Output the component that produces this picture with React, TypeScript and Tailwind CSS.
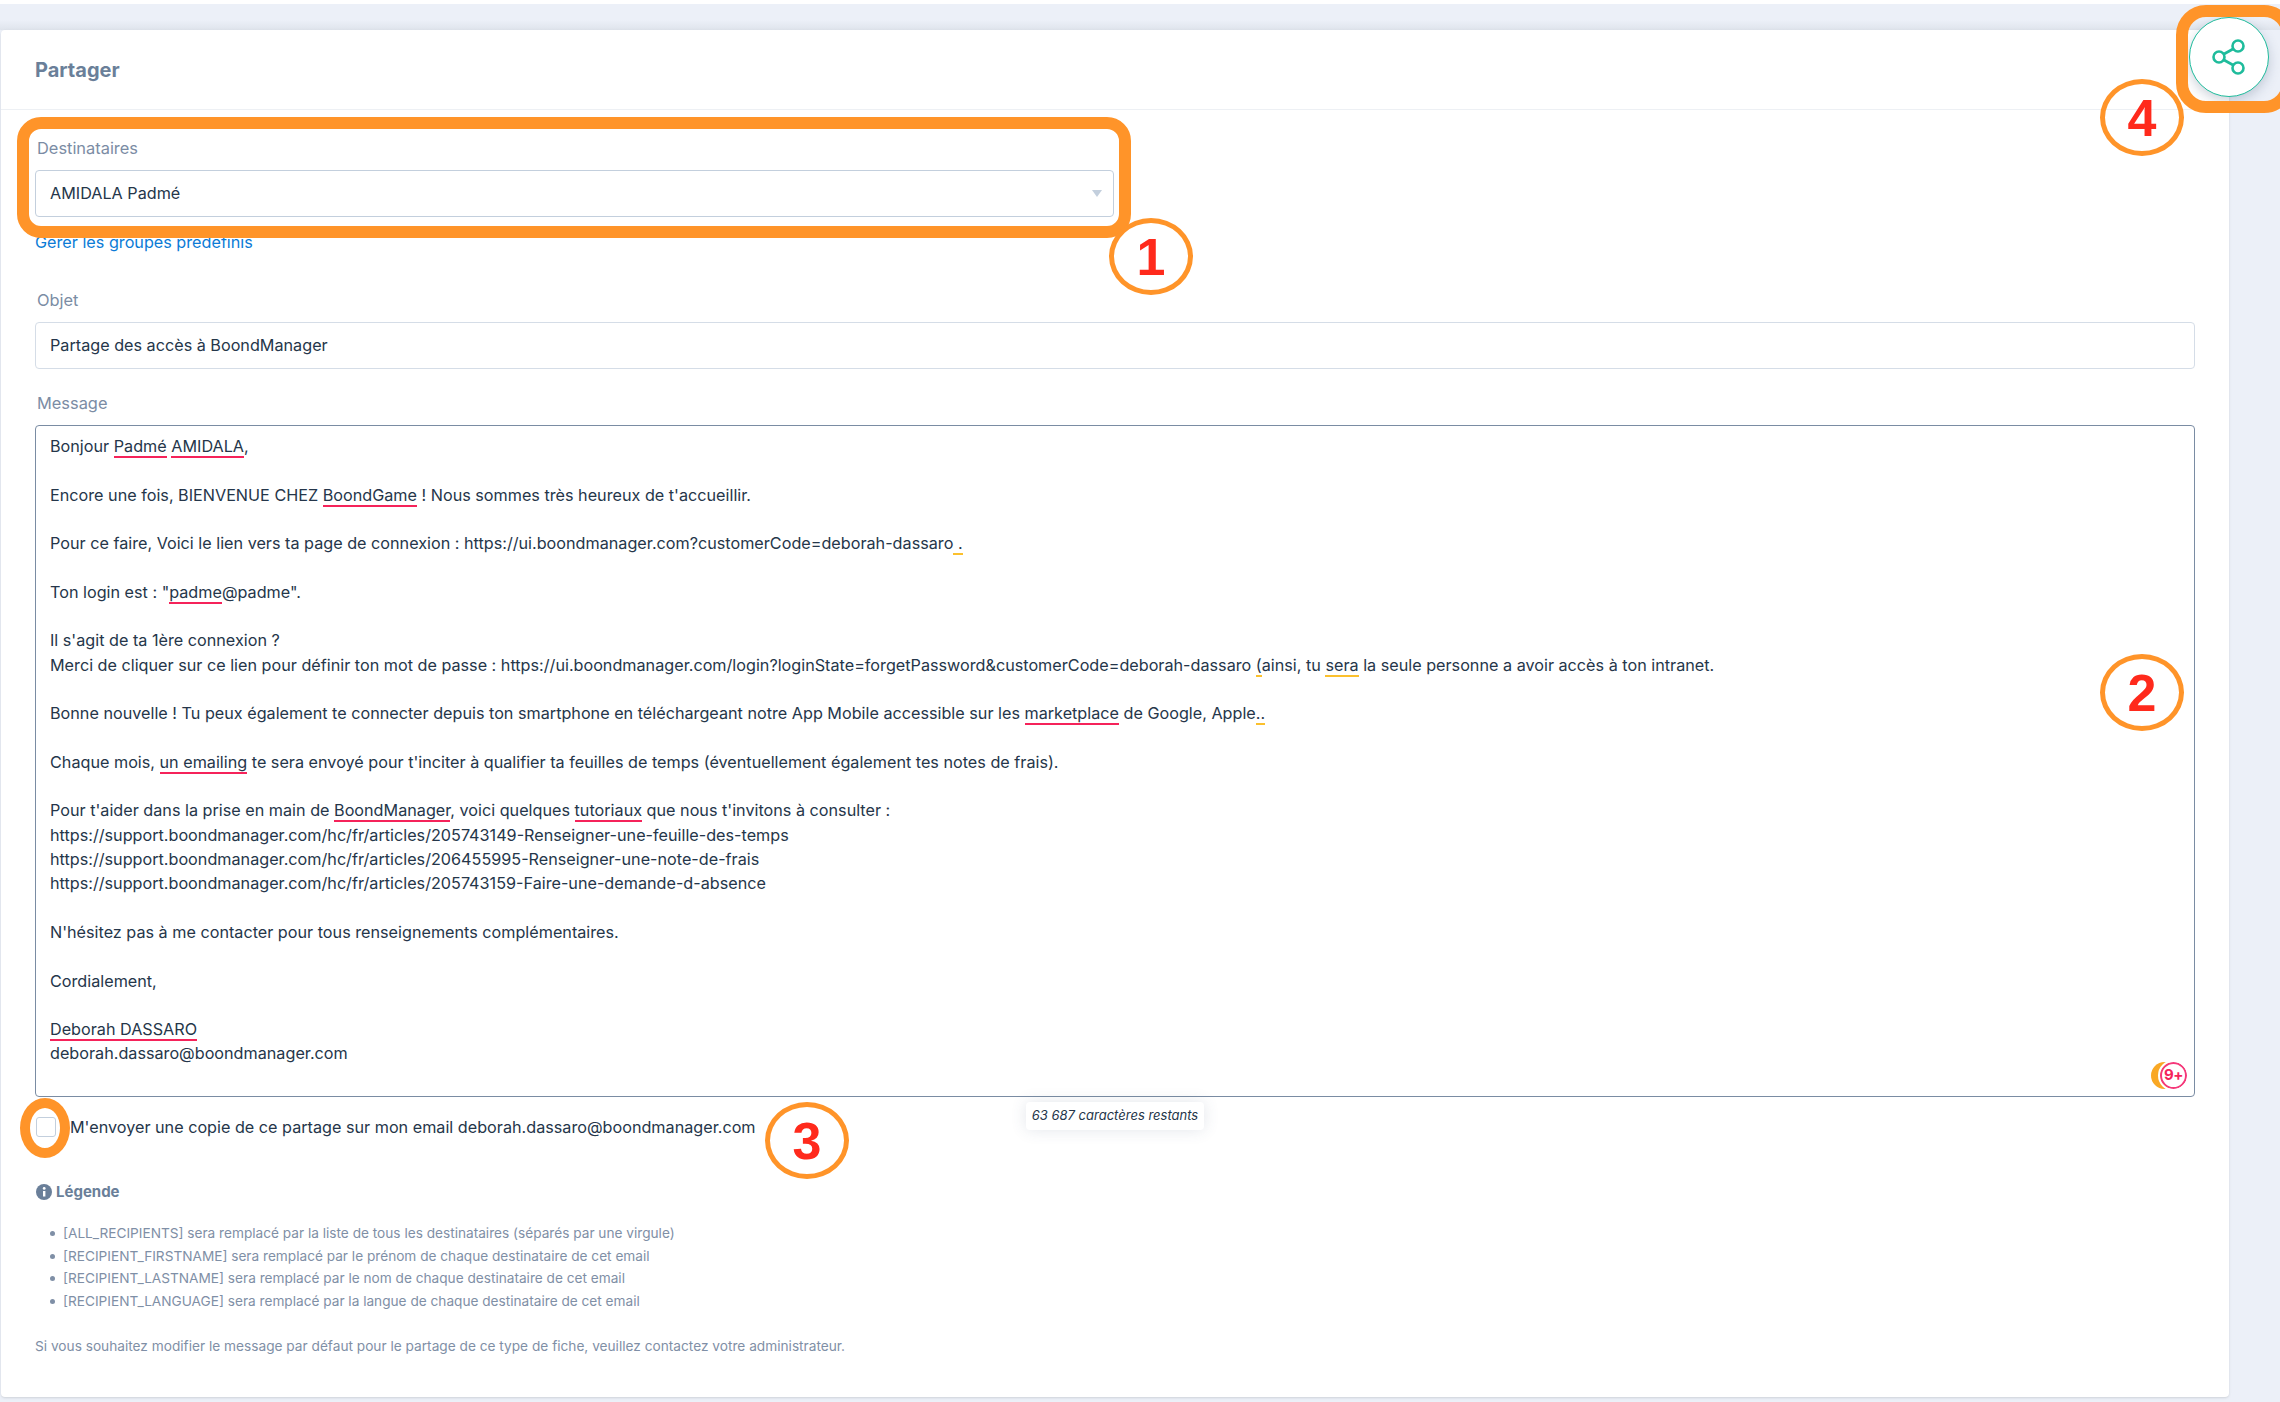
import { Info } from 'lucide-react';
import type { ReactNode } from 'react';

const Red = ({ children }: { children: ReactNode }) => (
  <span className="border-b-2 border-[#f5235a]">{children}</span>
);

const Yellow = ({ children }: { children: ReactNode }) => (
  <span className="border-b-2 border-[#fbc02d]">{children}</span>
);

const Line = ({ children }: { children?: ReactNode }) => (
  <div className="h-[24.3px] leading-[24.3px] whitespace-nowrap">{children}</div>
);

const Marker = ({ n, className }: { n: string; className: string }) => (
  <div
    className={`absolute w-[84px] h-[77px] rounded-[50%] border-[5px] border-[#ff9429] flex items-center justify-center text-[#ff2a1c] font-bold text-[52px] font-['Liberation_Sans',sans-serif] ${className}`}
  >
    {n}
  </div>
);

const legend = [
  '[ALL_RECIPIENTS] sera remplacé par la liste de tous les destinataires (séparés par une virgule)',
  '[RECIPIENT_FIRSTNAME] sera remplacé par le prénom de chaque destinataire de cet email',
  '[RECIPIENT_LASTNAME] sera remplacé par le nom de chaque destinataire de cet email',
  '[RECIPIENT_LANGUAGE] sera remplacé par la langue de chaque destinataire de cet email',
];

const App = () => {
  return (
    <div className="relative w-[2280px] h-[1402px] overflow-hidden bg-[#ecf0f8] pt-[30px] font-['Inter',sans-serif] text-[16.2px] text-[#25364a]">
      <div className="absolute top-0 left-0 right-0 h-[4px] bg-white" />
      <div className="absolute top-[20px] left-0 right-0 h-[10px] bg-gradient-to-b from-[#ecf0f8] to-[#dfe4ec]" />

      <div className="relative ml-[1px] w-[2228px] h-[1367px] bg-white rounded-[4px] shadow-sm">
        <div className="h-[80px] flex items-center px-[34px] border-b border-[#edf0f4]">
          <h2 className="text-[20px] font-bold text-[#6a7f99]">Partager</h2>
        </div>

        <div className="px-[34px]">
          <label className="block mt-[26px] ml-[2px] h-[24px] leading-[24px] text-[16.4px] text-[#7b8ca4]">Destinataires</label>
          <div className="mt-[10px] w-[1079px] h-[47px] border border-[#c3cfdd] rounded-[4px] flex items-center justify-between pl-[14px] pr-[11px]">
            <span>AMIDALA Padmé</span>
            <span className="w-0 h-0 border-x-[5px] border-x-transparent border-t-[7px] border-t-[#c3cfdd]" />
          </div>
          <a href="#" className="block mt-[13px] h-[24px] leading-[24px] text-[#0b7bd6]">
            Gérer les groupes prédéfinis
          </a>

          <label className="block mt-[34px] ml-[2px] h-[24px] leading-[24px] text-[16.4px] text-[#7b8ca4]">Objet</label>
          <div className="mt-[10px] w-[2160px] h-[47px] border border-[#d5dde7] rounded-[4px] flex items-center pl-[14px]">
            Partage des accès à BoondManager
          </div>

          <label className="block mt-[22px] ml-[2px] h-[24px] leading-[24px] text-[16.4px] text-[#7b8ca4]">Message</label>
          <div className="relative mt-[10px] w-[2160px] h-[672px] border border-[#7a8ca3] rounded-[4px] pl-[14px] pt-[8px]">
            <Line>Bonjour <Red>Padmé</Red> <Red>AMIDALA</Red>,</Line>
            <Line />
            <Line>Encore une fois, BIENVENUE CHEZ <Red>BoondGame</Red> ! Nous sommes très heureux de t'accueillir.</Line>
            <Line />
            <Line>Pour ce faire, Voici le lien vers ta page de connexion : https://ui.boondmanager.com?customerCode=deborah-dassaro<Yellow> .</Yellow></Line>
            <Line />
            <Line>Ton login est : "<Red>padme</Red>@padme".</Line>
            <Line />
            <Line>Il s'agit de ta 1ère connexion ?</Line>
            <Line>Merci de cliquer sur ce lien pour définir ton mot de passe : https://ui.boondmanager.com/login?loginState=forgetPassword&amp;customerCode=deborah-dassaro <Yellow>(</Yellow>ainsi, tu <Yellow>sera</Yellow> la seule personne a avoir accès à ton intranet.</Line>
            <Line />
            <Line>Bonne nouvelle ! Tu peux également te connecter depuis ton smartphone en téléchargeant notre App Mobile accessible sur les <Red>marketplace</Red> de Google, Apple<Yellow>..</Yellow></Line>
            <Line />
            <Line>Chaque mois, <Red>un emailing</Red> te sera envoyé pour t'inciter à qualifier ta feuilles de temps (éventuellement également tes notes de frais).</Line>
            <Line />
            <Line>Pour t'aider dans la prise en main de <Red>BoondManager</Red>, voici quelques <Red>tutoriaux</Red> que nous t'invitons à consulter :</Line>
            <Line>https://support.boondmanager.com/hc/fr/articles/205743149-Renseigner-une-feuille-des-temps</Line>
            <Line>https://support.boondmanager.com/hc/fr/articles/206455995-Renseigner-une-note-de-frais</Line>
            <Line>https://support.boondmanager.com/hc/fr/articles/205743159-Faire-une-demande-d-absence</Line>
            <Line />
            <Line>N'hésitez pas à me contacter pour tous renseignements complémentaires.</Line>
            <Line />
            <Line>Cordialement,</Line>
            <Line />
            <Line><Red>Deborah DASSARO</Red></Line>
            <Line>deborah.dassaro@boondmanager.com</Line>

            {/* grammar checker badge */}
            <div className="absolute right-[7px] bottom-[7px] w-[36px] h-[27px]">
              <div className="absolute left-0 top-0 w-[27px] h-[27px] rounded-full bg-[#f9a825]" />
              <div className="absolute right-0 top-0 w-[27px] h-[27px] rounded-full bg-white border-2 border-[#f5387a] outline-2 outline-white flex items-center justify-center text-[15px] font-bold tracking-[-0.5px] text-[#f5235a]">
                9+
              </div>
            </div>
          </div>

          <div className="flex items-center mt-[19px] h-[22px]">
            <span className="ml-[1px] w-[20px] h-[20px] border border-[#c3cfdd] rounded-[3px] bg-white" />
            <span className="ml-[14px]">M'envoyer une copie de ce partage sur mon email deborah.dassaro@boondmanager.com</span>
          </div>

          <div className="flex items-center gap-[4px] mt-[44px] h-[20px] text-[15px] font-bold text-[#6a7f99]">
            <svg width="16" height="16" viewBox="0 0 16 16" className="ml-[1px]">
              <circle cx="8" cy="8" r="8" fill="#6a7f99" />
              <rect x="7" y="7" width="2.4" height="5.5" fill="#fff" />
              <circle cx="8.2" cy="4.4" r="1.4" fill="#fff" />
            </svg>
            Légende
          </div>
          <ul className="mt-[20px] ml-[15px] text-[13.65px] text-[#7f8fa6]">
            {legend.map((item) => (
              <li key={item} className="flex items-center h-[22.7px]">
                <span className="w-[5px] h-[5px] rounded-full bg-[#7f8fa6] mr-[8px]" />
                {item}
              </li>
            ))}
          </ul>
          <p className="mt-[23px] text-[13.68px] text-[#7f8fa6]">
            Si vous souhaitez modifier le message par défaut pour le partage de ce type de fiche, veuillez contactez votre administrateur.
          </p>
        </div>
      </div>

      {/* counter tooltip */}
      <div className="absolute left-[1026px] top-[1102px] w-[178px] h-[28px] bg-white rounded-[4px] shadow-[0_0_16px_rgba(60,80,110,0.14)] flex items-center justify-center text-[13px] italic">
        63 687 caractères restants
      </div>

      {/* floating share button */}
      <div className="absolute left-[2189px] top-[17px] w-[80px] h-[80px] rounded-full bg-white border border-[#1fbc9c] shadow-[0_4px_12px_rgba(60,80,110,0.25)] flex items-center justify-center">
        <svg width="34" height="36" viewBox="0 0 34 36" fill="none" stroke="#1fbc9c" strokeWidth="2.6">
          <circle cx="7" cy="18" r="5.5" />
          <circle cx="26" cy="7" r="5.5" />
          <circle cx="26" cy="29" r="5.5" />
          <path d="M12 15 L21 10 M12 21 L21 26" />
        </svg>
      </div>

      {/* annotations */}
      <div className="absolute left-[17px] top-[117px] w-[1114px] h-[121px] border-[12px] border-[#ff9429] rounded-[24px]" />
      <div className="absolute left-[2176px] top-[5px] w-[118px] h-[108px] border-[12px] border-[#ff9429] rounded-[30px]" />
      <div className="absolute left-[20px] top-[1098px] w-[50px] h-[60px] border-[10px] border-[#ff9429] rounded-[50%]" />
      <Marker n="1" className="left-[1109px] top-[218px]" />
      <Marker n="2" className="left-[2100px] top-[654px]" />
      <Marker n="3" className="left-[765px] top-[1102px]" />
      <Marker n="4" className="left-[2100px] top-[79px]" />
    </div>
  );
};

export default App;
